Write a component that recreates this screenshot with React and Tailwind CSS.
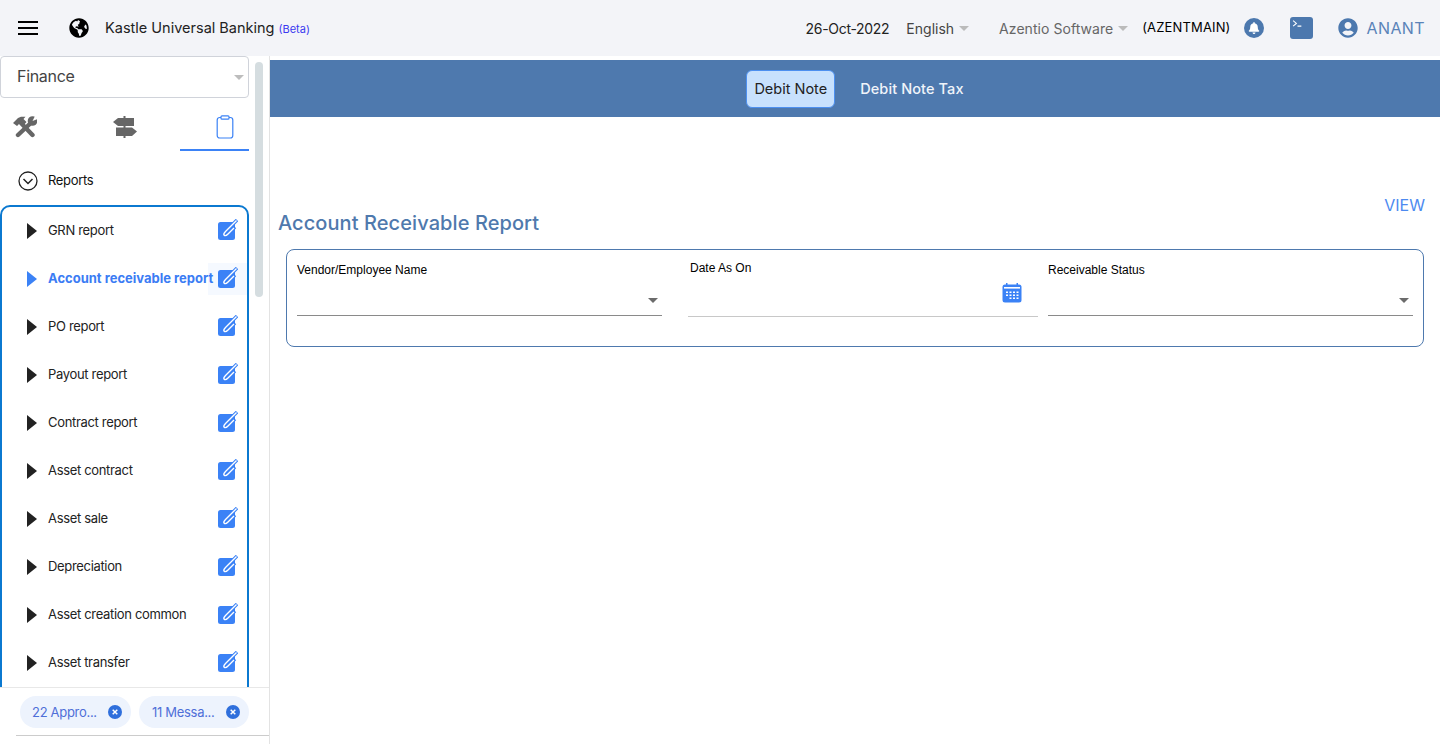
import React from "react";
import { FaGlobeAmericas, FaUserCircle, FaBell } from "react-icons/fa";

const items = ["GRN report","Account receivable report","PO report","Payout report","Contract report","Asset contract","Asset sale","Depreciation","Asset creation common","Asset transfer"];

function Caret({ className }) {
  return <span className={`inline-block w-0 h-0 border-l-[5px] border-r-[5px] border-t-[5px] border-l-transparent border-r-transparent ${className}`} />;
}

function EditIcon() {
  return (
    <svg width="20" height="21" viewBox="0 0 20 21" className="block">
      <rect x="0" y="3" width="17" height="18" rx="2.5" fill="#3b82f6" />
      <path d="M19 1 L7.5 12.5 C6 14 5.5 15.5 6.2 16.2 C7 17 8.5 16.5 10 15 L17 8" fill="none" stroke="#3b82f6" strokeWidth="3.4" />
      <path d="M18.5 1.5 L7.5 12.5 C6 14 5.5 15.5 6.2 16.2 C7 17 8.5 16.5 10 15 L16 9" fill="none" stroke="#fff" strokeWidth="1.4" />
    </svg>
  );
}

function ToolsIcon() {
  return (
    <svg width="24" height="22" viewBox="0 0 24 22" className="block">
      <path d="M21 4 L5 19" stroke="#666" strokeWidth="4.4" strokeLinecap="round" />
      <circle cx="19.5" cy="5" r="4.8" fill="#666" />
      <path d="M19.5 5 L22 0 L25 3 Z" fill="#fff" />
      <path d="M8 7 L19.5 19" stroke="#666" strokeWidth="4.4" strokeLinecap="round" />
      <path d="M0 7 L5 2 L8 0.8 L12.5 0.8 L10.5 3 L13.5 6 L9.5 10.5 L6.5 7.5 L4 10 Z" fill="#666" />
    </svg>
  );
}

function SignsIcon() {
  return (
    <svg width="24" height="22" viewBox="0 0 24 22" className="block" fill="#666">
      <rect x="10.5" y="0" width="2" height="22" />
      <path d="M0 6 L5 2 L21 2 L21 10 L5 10 Z" />
      <path d="M3 11.5 L19 11.5 L24 15.5 L19 20 L3 20 Z" />
    </svg>
  );
}

function Chip({ text, className }) {
  return (
    <div className={`flex items-center h-[32px] rounded-full bg-[#edf3fd] ${className}`}>
      <span className="mt-[1px] text-[13px] tracking-[-0.3px] text-[#4f6fd8] flex-1 whitespace-nowrap">{text}</span>
      <svg width="14" height="14" viewBox="0 0 14 14" className="mr-[9px]">
        <circle cx="7" cy="7" r="7" fill="#2f6fdc" />
        <path d="M4.7 4.7 L9.3 9.3 M9.3 4.7 L4.7 9.3" stroke="#fff" strokeWidth="1.5" />
      </svg>
    </div>
  );
}

function Field({ label, width, labelClass, line, children }) {
  return (
    <div className={`relative ${width}`}>
      <div className={`text-[12px] text-black whitespace-nowrap font-['Liberation_Sans',sans-serif] ${labelClass}`}>{label}</div>
      {children}
      <div className={line} />
    </div>
  );
}

export default function App() {
  return (
    <div className="w-[1440px] h-[744px] overflow-hidden bg-white font-['Inter',sans-serif] flex flex-col">
      <header className="h-[56px] shrink-0 bg-[#f3f4f8] flex items-center">
        <div className="ml-[18px] w-[20px] flex flex-col gap-[3.5px]">
          <span className="block h-[2.5px] bg-black" />
          <span className="block h-[2.5px] bg-black" />
          <span className="block h-[2.5px] bg-black" />
        </div>
        <FaGlobeAmericas className="ml-[31px] text-black" size={20} />
        <span className="ml-[16px] text-[14.5px] text-[#222] whitespace-nowrap">Kastle Universal Banking</span>
        <span className="ml-[4px] mt-[3px] text-[11px] text-[#3b3bf0]">(Beta)</span>
        <div className="ml-auto flex items-center pr-[15px]">
          <span className="text-[14px] tracking-[-0.3px] text-[#222]">26-Oct-2022</span>
          <span className="ml-[17px] text-[14px] text-[#444]">English</span>
          <Caret className="ml-[5px] border-t-[#bbb]" />
          <span className="ml-[30px] text-[14px] tracking-[0.05px] text-[#666]">Azentio Software</span>
          <Caret className="ml-[5px] border-t-[#bbb]" />
          <span className="ml-[14px] text-[13px] text-black tracking-[0.15px]">(AZENTMAIN)</span>
          <span className="ml-[14px] w-[20px] h-[20px] rounded-full bg-[#4c78ae] flex items-center justify-center">
            <FaBell className="text-white" size={12} />
          </span>
          <span className="ml-[26px] w-[23px] h-[22px] rounded-[3px] bg-[#4c78ae] flex items-start pl-[2px] pt-[2px]">
            <svg width="11" height="11" viewBox="0 0 10 10"><path d="M1 1.5 L4 4 L1 6.5 M5 6.5 L8.5 6.5" stroke="#fff" strokeWidth="1" fill="none" /></svg>
          </span>
          <FaUserCircle className="ml-[25px] text-[#4c78ae]" size={20} />
          <span className="ml-[8px] text-[16px] tracking-[0.4px] text-[#5a83b8]">ANANT</span>
        </div>
      </header>
      <div className="flex-1 flex min-h-0">
        <aside className="relative w-[270px] shrink-0 border-r border-[#e3e3e3] flex flex-col">
          <div className="flex-1 min-h-0 overflow-hidden pr-[20px]">
            <div className="w-[249px] h-[42px] border border-[#d0d3da] rounded-[4px] flex items-center pl-[16px] pr-[4px] pb-[2px] text-[16px] tracking-[-0.3px] text-[#444]">
              <span className="flex-1">Finance</span>
              <Caret className="border-t-[#bdbdbd] mt-[2px]" />
            </div>
            <div className="h-[53px] w-[249px] flex">
              <div className="w-[180px] flex">
                <span className="w-[96px] pl-[13px] pt-[18px]"><ToolsIcon /></span>
                <span className="pl-[17px] pt-[18px]"><SignsIcon /></span>
              </div>
              <div className="flex-1 border-b-2 border-[#3b82f6] flex justify-start pl-[36px] pt-[17px] h-[53px]">
                <svg width="18" height="24" viewBox="0 0 18 24" fill="none" stroke="#3b82f6" strokeWidth="1.2">
                  <rect x="1.2" y="2.5" width="15.6" height="20.5" rx="2.5" />
                  <rect x="5" y="0.8" width="8" height="3.4" rx="1" fill="#fff" />
                </svg>
              </div>
            </div>
            <div className="h-[54px] flex items-center pl-[18px] pt-[6px]">
              <svg width="20" height="20" viewBox="0 0 20 20" fill="none" stroke="#222" strokeWidth="1.3">
                <circle cx="10" cy="10" r="9" />
                <path d="M5.5 8 L10 12.5 L14.5 8" strokeWidth="1.5" />
              </svg>
              <span className="ml-[10px] text-[13px] tracking-[-0.33px] text-[#111]">Reports</span>
            </div>
            <div className="w-[249px] ml-[0px] border-2 border-[#0b79d0] rounded-[10px] pb-[48px]">
              {items.map((t, i) => {
                const active = i === 1;
                return (
                  <div key={t} className="h-[48px] flex items-center pl-[25px] relative">
                    <span className={`w-0 h-0 border-y-[8px] border-y-transparent border-l-[10px] ${active ? "border-l-[#3b82f6]" : "border-l-[#222]"}`} />
                    {active && <span className="absolute right-0 top-[8px] w-[39px] h-[32px] bg-[#f5f9ff]" />}
                    <span className={`relative ml-[11px] text-[13px] whitespace-nowrap ${active ? "text-[#3b7cf4] font-bold" : "text-[#222] tracking-[-0.33px]"}`}>{t}</span>
                    <span className="absolute left-[216px] top-[12px]"><EditIcon /></span>
                  </div>
                );
              })}
            </div>
          </div>
          <div className="absolute left-[255px] top-[6px] w-[8px] h-[235px] rounded-full bg-[#d5dde0]" />
          <div className="h-[57px] shrink-0 border-t border-[#e8e8e8] pt-[8px]">
            <div className="flex pl-[20px] gap-[8px]">
              <Chip text="22 Appro..." className="w-[111px] pl-[12px]" />
              <Chip text="11 Messa..." className="w-[110px] pl-[13px]" />
            </div>
            <div className="ml-[16px] mt-[7px] border-t border-[#cccccc]" />
          </div>
        </aside>
        <main className="flex-1 min-w-0 pt-[4px]">
          <div className="h-[57px] bg-[#4e79ae] flex items-center justify-center">
            <div className="h-[38px] px-[7px] flex items-center rounded-[6px] bg-[#c8e1fd] border border-[#4d90f0] text-[14.5px] text-[#222]">Debit Note</div>
            <div className="ml-[25px] text-[14.5px] tracking-[0.1px] text-[#f0f4fa] font-medium">Debit Note Tax</div>
          </div>
          <div className="relative pt-[78px] pl-[8px] pr-[15px]">
            <div className="absolute right-[15px] top-[76px] text-[16px] text-[#4c8af0]">VIEW</div>
            <h1 className="pt-[14px] text-[20px] tracking-[0.08px] leading-[28px] text-[#4f79ad] font-medium">Account Receivable Report</h1>
            <div className="ml-[8px] mt-[12px] h-[98px] w-[1138px] border border-[#4e79ae] rounded-[8px] flex pl-[10px] pt-[13px]">
              <Field label="Vendor/Employee Name" width="w-[365px]" labelClass="leading-[14px]" line="mt-[24px] border-b border-[#8a8a8a]">
                <div className="absolute right-[4px] top-[35px] flex"><Caret className="border-t-[#6b6b6b]" /></div>
                <div className="h-[14px]" />
              </Field>
              <Field label="Date As On" width="w-[350px] ml-[26px] -mt-[2px]" labelClass="leading-[14px] pl-[2px]" line="mt-[27px] border-b border-[#c8c8c8]">
                <svg width="20" height="20" viewBox="0 0 20 20" className="absolute right-[16px] top-[22px]">
                  <rect x="0.5" y="1.5" width="19" height="18" rx="2.5" fill="#3b82f6" />
                  <rect x="4" y="0" width="1.5" height="3" fill="#3b82f6" />
                  <rect x="14.5" y="0" width="1.5" height="3" fill="#3b82f6" />
                  <rect x="2" y="4" width="16" height="1.6" fill="#fff" />
                  <path d="M4 9.2h2M7.5 9.2h2M11 9.2h2M14.5 9.2h2M4 12.2h2M7.5 12.2h2M11 12.2h2M14.5 12.2h2M7.5 15.2h2M11 15.2h2M14.5 15.2h2" stroke="#fff" strokeWidth="1.5" />
                </svg>
                <div className="h-[14px]" />
              </Field>
              <Field label="Receivable Status" width="w-[365px] ml-[10px]" labelClass="leading-[14px]" line="mt-[24px] border-b border-[#8a8a8a]">
                <div className="absolute right-[4px] top-[35px] flex"><Caret className="border-t-[#6b6b6b]" /></div>
                <div className="h-[14px]" />
              </Field>
            </div>
          </div>
        </main>
      </div>
    </div>
  );
}
